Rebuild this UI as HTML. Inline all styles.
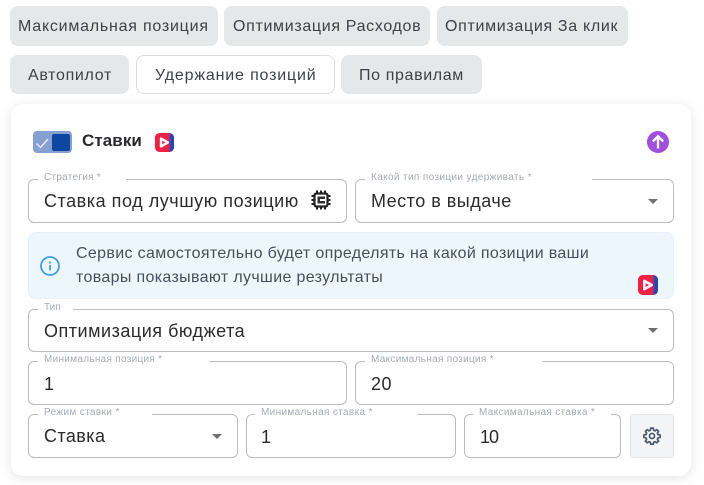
<!DOCTYPE html>
<html><head><meta charset="utf-8">
<style>
html,body{margin:0;padding:0;background:#fff;}
body{width:704px;height:485px;position:relative;overflow:hidden;font-family:"Liberation Sans",sans-serif;}
.a{position:absolute;white-space:nowrap;}
.chip{position:absolute;background:#e5e7e8;border-radius:8px;box-sizing:border-box;}
.ct{position:absolute;white-space:nowrap;font-size:16px;line-height:20px;color:#3f4146;}
.card{position:absolute;left:11px;top:104px;width:680px;height:372px;background:#fff;border-radius:12px;box-shadow:0 2px 12px rgba(0,0,0,.11);}
.f{position:absolute;box-sizing:border-box;border:1px solid #bdbdbd;border-radius:6px;background:#fff;}
.c{position:absolute;height:6px;background:#fff;}
.lb{position:absolute;white-space:nowrap;font-size:10px;line-height:12px;color:#a6aab1;}
.v{position:absolute;white-space:nowrap;font-size:18px;line-height:22px;color:#2b2b2b;}
.tx{position:absolute;white-space:nowrap;font-size:16px;line-height:20px;color:#44505c;letter-spacing:.34px;}
</style></head><body>

<div class="chip" style="left:10px;top:6px;width:208px;height:40px"></div>
<div class="ct" style="left:18px;top:17px;letter-spacing:.77px">Максимальная позиция</div>
<div class="chip" style="left:224px;top:6px;width:206px;height:40px"></div>
<div class="ct" style="left:233px;top:17px;letter-spacing:.67px">Оптимизация Расходов</div>
<div class="chip" style="left:437px;top:6px;width:191px;height:40px"></div>
<div class="ct" style="left:445px;top:17px;letter-spacing:.68px">Оптимизация За клик</div>

<div class="chip" style="left:10px;top:55px;width:119px;height:39px"></div>
<div class="ct" style="left:28px;top:66px;letter-spacing:.68px">Автопилот</div>
<div class="chip" style="left:136px;top:55px;width:199px;height:39px;background:#fff;border:1px solid #dcdcdc"></div>
<div class="ct" style="left:155px;top:66px;letter-spacing:.83px">Удержание позиций</div>
<div class="chip" style="left:341px;top:55px;width:141px;height:39px"></div>
<div class="ct" style="left:359px;top:66px;letter-spacing:.63px">По правилам</div>

<div class="card"></div>

<!-- toggle -->
<div class="a" style="left:33px;top:131px;width:39px;height:22px;background:#86a0cf;border-radius:4px"></div>
<div class="a" style="left:52px;top:134px;width:18px;height:17px;background:#0d47a1;border-radius:2px"></div>
<svg class="a" style="left:35px;top:136px" width="15" height="14" viewBox="0 0 15 14"><path d="M1.5 7.5 L5.5 11.5 L13 3" fill="none" stroke="#e8eef8" stroke-width="1.4"/></svg>
<div class="a" style="left:82px;top:131px;font-size:17px;line-height:20px;font-weight:700;color:#2a2a2e;letter-spacing:.08px">Ставки</div>

<!-- video icon 1 -->
<svg class="a" style="left:155px;top:133px" width="19" height="19" viewBox="0 0 19 19"><defs><linearGradient id="g" x1="0" x2="1" y1="0" y2="0"><stop offset="0" stop-color="#f5203f"/><stop offset=".72" stop-color="#ee1f4b"/><stop offset=".84" stop-color="#1d4bb8"/><stop offset="1" stop-color="#1c49ad"/></linearGradient></defs><rect x="0" y="0" width="19" height="19" rx="4.5" fill="url(#g)"/><path d="M6 5.6 L13 9.5 L6 13.4 Z" fill="#f02a50" stroke="#fff" stroke-width="2.4" stroke-linejoin="round"/></svg>

<!-- up -->
<svg class="a" style="left:647px;top:131px" width="22" height="22" viewBox="0 0 22 22"><circle cx="11" cy="11" r="11" fill="#a04fdc"/><path d="M11 17.5 V5.5 M5.8 10.5 L11 5.3 L16.2 10.5" fill="none" stroke="#fff" stroke-width="2.3"/></svg>

<!-- row 1 -->
<div class="f" style="left:28px;top:179px;width:319px;height:44px"></div>
<div class="c" style="left:38px;width:88px;top:176px"></div>
<div class="lb" style="left:44px;top:172px;letter-spacing:.27px">Стратегия *</div>
<div class="v" style="left:44px;top:190px;letter-spacing:.54px">Ставка под лучшую позицию</div>
<svg class="a" style="left:311px;top:190px" width="20" height="20" viewBox="0 0 20 20"><rect x="3.5" y="3.5" width="13" height="13" rx="2" fill="none" stroke="#222" stroke-width="2.2"/><path d="M6.5 6.5 H14 V9 H9 V11 H14 V13.5 H6.5 Z" fill="#333"/><path d="M6 0.5 V3 M10 0.5 V3 M14 0.5 V3 M6 17 V19.5 M10 17 V19.5 M14 17 V19.5 M0.5 6 H3 M0.5 10 H3 M0.5 14 H3 M17 6 H19.5 M17 10 H19.5 M17 14 H19.5" stroke="#222" stroke-width="2"/></svg>

<div class="f" style="left:355px;top:179px;width:319px;height:44px"></div>
<div class="c" style="left:365px;width:227px;top:176px"></div>
<div class="lb" style="left:371px;top:172px;letter-spacing:.37px">Какой тип позиции удерживать *</div>
<div class="v" style="left:371px;top:190px;letter-spacing:.49px">Место в выдаче</div>
<div class="a" style="left:648px;top:199px;width:0;height:0;border-left:5.5px solid transparent;border-right:5.5px solid transparent;border-top:5.5px solid #6f6f6f"></div>

<!-- alert -->
<div class="a" style="left:28px;top:232px;width:646px;height:67px;box-sizing:border-box;background:#eef6fd;border:1px solid #e6f0f9;border-radius:8px"></div>
<svg class="a" style="left:40px;top:256px" width="20" height="20" viewBox="0 0 20 20"><circle cx="10" cy="10" r="9" fill="none" stroke="#3f9ee6" stroke-width="1.8"/><rect x="9.1" y="9" width="1.8" height="5.5" fill="#3f9ee6"/><rect x="9.1" y="5.6" width="1.8" height="1.9" fill="#3f9ee6"/></svg>
<div class="tx" style="left:76px;top:244px">Сервис самостоятельно будет определять на какой позиции ваши</div>
<div class="tx" style="left:76px;top:268px">товары показывают лучшие результаты</div>
<svg class="a" style="left:638px;top:275px" width="20" height="20" viewBox="0 0 19 19"><defs><linearGradient id="g2" x1="0" x2="1" y1="0" y2="0"><stop offset="0" stop-color="#f5203f"/><stop offset=".72" stop-color="#ee1f4b"/><stop offset=".84" stop-color="#1d4bb8"/><stop offset="1" stop-color="#1c49ad"/></linearGradient></defs><rect x="0" y="0" width="19" height="19" rx="4.5" fill="url(#g2)"/><path d="M6 5.6 L13 9.5 L6 13.4 Z" fill="#f02a50" stroke="#fff" stroke-width="2.4" stroke-linejoin="round"/></svg>

<!-- type -->
<div class="f" style="left:28px;top:309px;width:646px;height:43px"></div>
<div class="c" style="left:38px;width:35px;top:306px"></div>
<div class="lb" style="left:44px;top:302px">Тип</div>
<div class="v" style="left:44px;top:320px;letter-spacing:.52px">Оптимизация бюджета</div>
<div class="a" style="left:648px;top:328px;width:0;height:0;border-left:5.5px solid transparent;border-right:5.5px solid transparent;border-top:5.5px solid #6f6f6f"></div>

<!-- positions -->
<div class="f" style="left:28px;top:361px;width:319px;height:44px"></div>
<div class="c" style="left:38px;width:171px;top:358px"></div>
<div class="lb" style="left:44px;top:354px;letter-spacing:.29px">Минимальная позиция *</div>
<div class="v" style="left:44px;top:373px">1</div>
<div class="f" style="left:355px;top:361px;width:319px;height:44px"></div>
<div class="c" style="left:365px;width:177px;top:358px"></div>
<div class="lb" style="left:371px;top:354px;letter-spacing:.3px">Максимальная позиция *</div>
<div class="v" style="left:371px;top:373px;letter-spacing:.5px">20</div>

<!-- bottom -->
<div class="f" style="left:28px;top:414px;width:210px;height:44px"></div>
<div class="c" style="left:38px;width:114px;top:411px"></div>
<div class="lb" style="left:44px;top:407px;letter-spacing:.36px">Режим ставки *</div>
<div class="v" style="left:44px;top:425px;letter-spacing:.42px">Ставка</div>
<div class="a" style="left:212px;top:434px;width:0;height:0;border-left:5.5px solid transparent;border-right:5.5px solid transparent;border-top:5.5px solid #6f6f6f"></div>

<div class="f" style="left:246px;top:414px;width:210px;height:44px"></div>
<div class="c" style="left:255px;width:162px;top:411px"></div>
<div class="lb" style="left:261px;top:407px;letter-spacing:.34px">Минимальная ставка *</div>
<div class="v" style="left:261px;top:426px">1</div>

<div class="f" style="left:464px;top:414px;width:157px;height:44px"></div>
<div class="c" style="left:473px;width:138px;top:411px"></div>
<div class="lb" style="left:479px;top:407px;letter-spacing:.34px">Максимальная ставка *</div>
<div class="v" style="left:480px;top:426px;letter-spacing:-1px">10</div>

<div class="a" style="left:630px;top:414px;width:44px;height:44px;box-sizing:border-box;background:#f3f4f6;border:1px solid #e4e6ea;border-radius:4px"></div>
<svg class="a" style="left:643px;top:427px" width="18" height="18" viewBox="0 0 24 24" fill="none" stroke="#4b5563" stroke-width="2.2" stroke-linejoin="round"><path d="M10.3 2.5h3.4l.5 2.8 1.9.8 2.3-1.6 2.4 2.4-1.6 2.3.8 1.9 2.8.5v3.4l-2.8.5-.8 1.9 1.6 2.3-2.4 2.4-2.3-1.6-1.9.8-.5 2.8h-3.4l-.5-2.8-1.9-.8-2.3 1.6-2.4-2.4 1.6-2.3-.8-1.9-2.8-.5v-3.4l2.8-.5.8-1.9-1.6-2.3 2.4-2.4 2.3 1.6 1.9-.8z" transform="translate(0 -1)"/><circle cx="12" cy="12" r="3.4"/></svg>

</body></html>
